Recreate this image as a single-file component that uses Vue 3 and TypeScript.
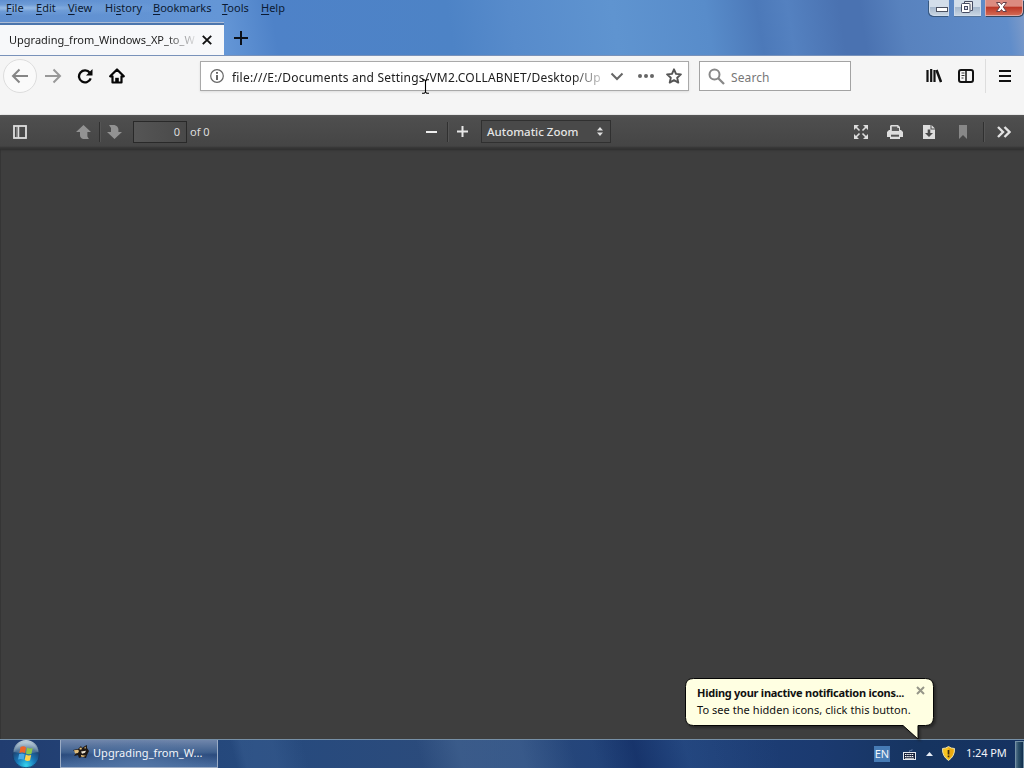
<script setup lang="ts">
interface MenuItem { key: string; rest: string; width: number; pre?: string }
const menus: MenuItem[] = [
  { key: 'F', rest: 'ile', width: 30 },
  { key: 'E', rest: 'dit', width: 32 },
  { key: 'V', rest: 'iew', width: 37 },
  { pre: 'Hi', key: 's', rest: 'tory', width: 48 },
  { key: 'B', rest: 'ookmarks', width: 69 },
  { key: 'T', rest: 'ools', width: 39 },
  { key: 'H', rest: 'elp', width: 40 },
]
</script>

<template>
  <div class="screen">
    <header class="titlebar">
      <div class="top">
        <nav class="menu">
          <span v-for="m in menus" :key="m.key + m.rest" :style="{ width: m.width + 'px' }">{{ m.pre }}<u>{{ m.key }}</u>{{ m.rest }}</span>
        </nav>
        <div class="winbtns">
          <span class="wb min"><svg width="19" height="16"><rect x="7.5" y="7.5" width="11" height="4" fill="#fff" stroke="#4c5262"/></svg></span>
          <span class="wb max"><svg width="26" height="16"><path d="M10.5 3.5V1.500h8v9h-2" fill="#eee" stroke="#454b62"/><rect x="7.500" y="3.500" width="8.500" height="9" rx="1" fill="#fff" stroke="#454b62"/><rect x="10.500" y="6.500" width="3" height="3" fill="#dde" stroke="#454b62"/></svg></span>
          <span class="wb close"><svg width="37" height="16"><path d="M12.500 2.500h3.500l1.500 2 1.500-2h3.500l-3.200 4.500 3.200 4.500h-3.500l-1.500-2-1.500 2h-3.500l3.200-4.500z" fill="#fff" stroke="#664048"/></svg></span>
        </div>
      </div>
      <div class="tabs">
        <div class="tab">
          <span class="tabtitle">Upgrading_from_Windows_XP_to_W</span>
          <svg width="12" height="12"><path d="M1.800 1.800l8.400 8.400M10.200 1.800l-8.400 8.400" stroke="#111" stroke-width="1.900"/></svg>
        </div>
        <svg class="plus" width="14" height="14"><path d="M7 0v14M0 7h14" stroke="#0b1018" stroke-width="2"/></svg>
      </div>
    </header>

    <section class="nav">
      <span class="back"><svg width="18" height="16" fill="none" stroke="#858585" stroke-width="2"><path d="M17 8H2M8.500 1.500L2 8l6.500 6.500"/></svg></span>
      <svg class="fwd" width="18" height="16" fill="none" stroke="#989898" stroke-width="2"><path d="M1 8h15M9.500 1.500L16 8l-6.500 6.500"/></svg>
      <svg class="reload" width="16" height="16" fill="none" stroke="#080808" stroke-width="2.300"><path d="M12.800 4.800A6 6 0 1 0 13.700 10.300"/><path d="M15.500 1v6.500H9z" fill="#080808" stroke="none"/></svg>
      <svg class="home" width="16" height="16"><path d="M8 1.500L1.200 8.300H3.500V14.500H12.500V8.300H14.800Z" fill="none" stroke="#050505" stroke-width="2.200" stroke-linejoin="round"/><path d="M6.200 14V9.800h3.600V14z" fill="#050505"/></svg>
      <div class="url">
        <svg width="14" height="14"><circle cx="7" cy="7" r="6.300" fill="none" stroke="#666" stroke-width="1.200"/><path d="M7 6v5M7 3v1.800" stroke="#555" stroke-width="1.800"/></svg>
        <span class="address">file:///E:/Documents and Settings/VM2.COLLABNET/Desktop/Up</span>
        <svg class="chev" width="14" height="9"><path d="M1.500 1.500L7 7l5.500-5.500" fill="none" stroke="#666" stroke-width="2"/></svg>
        <svg class="dots" width="16" height="4" fill="#666"><circle cx="2" cy="2" r="2"/><circle cx="8" cy="2" r="2"/><circle cx="14" cy="2" r="2"/></svg>
        <svg class="star" width="16" height="16"><path d="M8 1.300l2 4.600 4.900.5-3.700 3.300 1.100 4.900L8 12.100l-4.300 2.500 1.100-4.900L1.100 6.400 6 5.900z" fill="none" stroke="#555" stroke-width="1.900" stroke-linejoin="round"/></svg>
      </div>
      <div class="search">
        <svg width="17" height="17" fill="none" stroke="#888"><circle cx="6.500" cy="6.500" r="5" stroke-width="2"/><path d="M10 10l6 6" stroke-width="2.300"/></svg>
        <span>Search</span>
      </div>
      <svg class="library" width="16" height="14" stroke="#111"><path d="M1.500 1v12M5.200 0v13M8.500 1v12" stroke-width="2.200"/><path d="M10.500 1l4.500 12" stroke-width="2.500"/></svg>
      <svg class="sidebar" width="16" height="14"><rect x="1" y="1" width="14" height="12" rx="2" fill="none" stroke="#111" stroke-width="2"/><path d="M8 1v12" stroke="#111" stroke-width="1.500"/><path d="M3.500 4h3M3.500 6.500h3M3.500 9h2" stroke="#333"/></svg>
      <i class="navsep"></i>
      <svg class="burger" width="12" height="12"><path d="M0 1h12M0 6h12M0 11h12" stroke="#111" stroke-width="2"/></svg>
    </section>

    <section class="pdfbar">
      <svg class="p-side" width="14" height="14"><rect x="1" y="1" width="12" height="12" fill="none" stroke="#dedede" stroke-width="1.800"/><path d="M3 2h2v10H3z" fill="#777"/><path d="M5.500 1v12" stroke="#dedede" stroke-width="1.500"/></svg>
      <svg class="p-up" width="16" height="14" fill="#929292"><path d="M7.500 0L15 7h-3.600v4.500l1.500 2.500H7.200Q4 13 4 10V7H0z"/></svg>
      <i class="psep a"></i>
      <svg class="p-down" width="16" height="14" fill="#929292"><path d="M7.500 14L15 7h-3.600V4Q11 1 7.500 0H2l2 3v4H0z"/></svg>
      <span class="page">0</span><span class="of">of 0</span>
      <svg class="p-minus" width="11" height="10"><path d="M0 5h11" stroke="#eee" stroke-width="2"/></svg>
      <i class="psep b"></i>
      <svg class="p-plus" width="11" height="11"><path d="M0 5.500h11M5.500 0v11" stroke="#e8e8e8" stroke-width="2"/></svg>
      <div class="zoom"><span>Automatic Zoom</span><svg width="6" height="9" fill="#e0e0e0"><path d="M0 3.500L3 0l3 3.500zM0 5.500h6L3 9z"/></svg></div>
      <svg class="p-full" width="14" height="14" fill="#ddd" stroke="#ddd"><path d="M0 0h5L3.500 1.500 1.500 3.500 0 5zM14 0v5l-1.500-1.500-2-2L9 0zM0 14V9l1.500 1.500 2 2L5 14zM14 14H9l1.500-1.500 2-2L14 9z" stroke="none"/><path d="M2 2l3.500 3.500M12 2L8.500 5.500M2 12l3.500-3.500M12 12L8.500 8.500" stroke-width="1.600"/></svg>
      <svg class="p-print" width="16" height="14"><path d="M4 0h7l2 2v3h1l2 2v5h-3v2H3v-2H0V7l2-2h1V1z" fill="#ddd"/><path d="M4.800 1.500h5.500V3H12v3H4.800z" fill="#5c5c5c"/><path d="M4 9.700h8v2H4z" fill="#555"/></svg>
      <svg class="p-save" width="12" height="14"><path d="M0 0h7.500v4.500H12V14H0zM8.500 0L12 3.500H8.500z" fill="#ddd"/><path d="M4.700 4.500h2.600V8H10l-4 4-4-4h2.700z" fill="#4b4b4b"/></svg>
      <svg class="p-mark" width="8" height="14"><path d="M0 0h8v14l-4-4-4 4z" fill="#888"/></svg>
      <i class="psep c"></i>
      <svg class="p-more" width="14" height="12"><path d="M1 1l5 5-5 5M7.500 1l5 5-5 5" fill="none" stroke="#e2e2e2" stroke-width="2.400"/></svg>
    </section>
    <main class="viewer"></main>

    <footer class="taskbar">
      <svg class="orb" viewBox="0 0 28 28" width="28" height="28">
        <defs>
          <radialGradient id="orb" cx=".5" cy=".9" r=".85"><stop offset="0" stop-color="#35d5ee"/><stop offset=".4" stop-color="#1978b8"/><stop offset=".75" stop-color="#1d4777"/><stop offset="1" stop-color="#8aa6bd"/></radialGradient>
          <linearGradient id="shine" x2="0" y2="1"><stop offset="0" stop-color="#c5d4de"/><stop offset="1" stop-color="#8fa9bd" stop-opacity=".3"/></linearGradient>
        </defs>
        <circle cx="14" cy="14.500" r="13.300" fill="url(#orb)" stroke="#173762" stroke-width=".7"/><path d="M1.500 12A12.500 12 0 0 1 26.500 12Q14 14.500 1.500 12z" fill="url(#shine)"/>
        <path d="M8.500 7q3-1.500 5.500.2l-1 6q-2.600-1.600-5.600-.3z" fill="#ee6427"/><path d="M15 7.500q2.600 1.600 5.700.4l-1.300 6q-3 1-5.400-.5z" fill="#8ec847"/><path d="M7.100 14q3-1.200 5.600.3l-1.100 5.500q-2.500-1.500-5.500-.3z" fill="#4baae5"/><path d="M13.800 14.600q2.500 1.500 5.400.5L18 20.600q-3 1-5.300-.5z" fill="#ffd34a"/>
      </svg>
      <div class="task">
        <svg width="16" height="14"><path d="M0 5l5-1 3-3 1 2 3-2 2-1v3l2 3-2 4-1 3-4-1-3 1-1-3-4 1 2-3z" fill="#1e1713"/><path d="M1 5.300l4-.5 1 1.200-1 2-3 .5zM6 4l2-1.700 1 1.500-1 1zM11 3l2-1.500-.5 2.200zM8 10l5 .8-3 1.200-2-.5z" fill="#e0bd7c"/><path d="M8 6.500l5-.8-1 2-3 1z" fill="#ede5d3"/></svg>
        <span>Upgrading_from_W...</span>
      </div>
      <div class="tray">
        <span class="lang">EN</span>
        <svg class="kbd" width="13" height="11"><path d="M6.500 3V1.500H9V0" fill="none" stroke="#536b96"/><rect x=".5" y="3.500" width="12" height="7" fill="#17213a" stroke="#e5e9ef"/><path d="M2 5.500h9M2 7.500h9" stroke="#fff" stroke-dasharray="1.500 .7"/><path d="M2 9.300h9" stroke="#ddd"/></svg>
        <svg class="tri" width="7" height="4"><path d="M0 4l3.500-4L7 4z" fill="#e8eef7"/></svg>
        <svg class="shield" width="13" height="15"><path d="M6.500.5Q9 2.500 12.500 2.500 13 10 6.500 14.500 0 10 .5 2.500 4 2.500 6.500.5z" fill="#f8c420" stroke="#e6dcae"/><path d="M6.500 1.500Q9 3 11.500 3.300 12 9.500 6.500 13z" fill="#e9a910"/><path d="M6.500 4v4.500M6.500 9.500v1.800" stroke="#3b2b10" stroke-width="1.700"/></svg>
        <span class="clock">1:24 PM</span>
        <i class="desktop"></i>
      </div>
    </footer>

    <svg class="cursor" width="9" height="15"><path d="M1 .7h2.300L4.500 2 5.700.7H8M4.500 2v11M1 14.300h2.300L4.500 13l1.200 1.300H8" fill="none" stroke="#000" stroke-width="1.100"/></svg>
    <aside class="balloon">
      <svg class="bubble" width="256" height="70"><path d="M9.500 1.500H241.500Q249.500 1.500 249.500 9.500V40.500Q249.500 48.500 241.500 48.500H234V62L219 48.500H9.500Q1.500 48.500 1.500 40.500V9.500Q1.500 1.500 9.500 1.500z" fill="#ffffe2" stroke="#050505"/></svg>
      <div class="btext">
        <div class="brow"><strong>Hiding your inactive notification icons...</strong><svg width="9" height="9"><path d="M1 1l7 7M8 1L1 8" stroke="#969689" stroke-width="2"/></svg></div>
        <p>To see the hidden icons, click this button.</p>
      </div>
    </aside>
  </div>
</template>

<style>
html, body { margin: 0; overflow: hidden; background: #3e3e3e; }
</style>
<style scoped>
* { box-sizing: border-box; }
svg { display: block; flex: none; }
.screen { width: 1024px; height: 768px; display: flex; flex-direction: column; position: relative; font-family: "Noto Sans", "Open Sans", sans-serif; font-size: 11px; overflow: hidden; white-space: nowrap; }
.titlebar { height: 56px; background: radial-gradient(ellipse at 15px 8px, #9cbfe9 0, #82addf66 70px, transparent 170px), linear-gradient(81deg, #608fcf 0, #6496d6 22%, #4e82c8 27%, #4d83c6 44%, #578bcb 50%, #5f94d0 60%, #588cca 69%, #4c79b9 74%, #5481c0 77%, #4a72b1 82%, #4a72b1 84%, #5882be 88%, #608dca 98%, #809cc9); border-bottom: 1px solid #7992ba; display: flex; flex-direction: column; flex: none; }
.top { height: 24px; display: flex; justify-content: space-between; }
.menu { display: flex; padding-left: 6px; color: #0b1a32; line-height: 16px; }
.menu u { text-underline-offset: 2px; }
.winbtns { display: flex; height: 16px; padding-right: 1px; }
.wb { height: 16px; border: 1px solid #d0dceb; border-top: 0; background: linear-gradient(#d3deea 0 45%, #a7b9ce 50%, #c7d4e1); overflow: hidden; display: flex; }
.min { width: 20px; border-radius: 0 0 0 5px; margin-right: 5px; box-shadow: -1px 1px #37587f; }
.max { width: 27px; margin-right: 4px; box-shadow: 0 1px #54749b; }
.close { width: 38px; border-radius: 0 0 5px 0; border-color: #e1a9a5; background: linear-gradient(#dc8b80 0 40%, #bd3828 50%, #d26852); box-shadow: 1px 1px #35465d; }
.wb svg { margin-left: -1px; }
.close svg { margin-left: -2px; }
.tabs { display: flex; height: 32px; }
.tab { width: 224px; height: 32px; background: #f7f8fa; border-top: 2px solid #4b75ad; display: flex; align-items: center; padding-left: 9px; flex: none; box-shadow: 0 -1px #adbcd4; }
.tabtitle { width: 187px; margin-right: 5px; padding-bottom: 2px; color: #1c1c1c; mask-image: linear-gradient(90deg, #000 155px, transparent 190px); }
.plus { margin: 8px 0 0 10px; }
.nav { height: 59px; flex: none; background: #f5f5f5; display: flex; align-items: center; padding: 0 13px 19px 3px; }
.back { width: 34px; height: 34px; border: 1px solid #ddd; border-radius: 50%; background: #fafafa; display: flex; align-items: center; justify-content: center; }
.fwd { margin-left: 7px; }
.reload { margin-left: 15px; }
.home { margin-left: 16px; }
.url { width: 489px; height: 30px; margin-left: 75px; background: #fff; border: 1px solid #a9a9a9; display: flex; align-items: center; padding-left: 9px; flex: none; box-shadow: 0 1px 2px #ddd; }
.address { width: 369px; margin-left: 8px; padding-top: 2px; font-size: 12px; letter-spacing: .2px; color: #202020; mask-image: linear-gradient(90deg, #000 340px, transparent 378px); }
.chev { margin-left: 9px; }
.dots { margin-left: 14px; }
.star { margin-left: 12px; }
.search { width: 152px; height: 30px; margin-left: 10px; background: #fff; border: 1px solid #a3a3a3; display: flex; align-items: center; padding-left: 8px; color: #777; font-size: 12px; gap: 6px; flex: none; letter-spacing: .1px; }
.search span { padding-top: 2px; }
.library { margin-left: 75px; }
.sidebar { margin-left: 16px; }
.navsep { width: 1px; height: 34px; background: #ddd; margin: 0 13px 0 11px; }
.pdfbar { height: 34px; flex: none; background: linear-gradient(#555 0, #4e4e4e 3px, #454545 31px, #343434 33px); box-shadow: 0 1px 2px #2c2c2c; display: flex; align-items: center; padding: 0 13px 1px; position: relative; color: #ddd; }
.p-up { margin-left: 49px; }
.psep { width: 1px; height: 20px; background: #303030; box-shadow: 1px 0 #555; }
.a { margin: 0 7px; }
.page { width: 54px; height: 22px; border: 1px solid #292929; background: linear-gradient(90deg, #555, #494949); margin-left: 10px; line-height: 20px; text-align: right; padding-right: 6px; }
.of { width: 20px; margin-left: 3px; }
.p-minus { margin-left: 216px; }
.b { margin: 0 9px 0 10px; }
.zoom { width: 130px; height: 23px; margin-left: 13px; border: 1px solid #303030; background: #494949; display: flex; align-items: center; justify-content: space-between; padding: 0 7px 0 5px; font-size: 11.5px; font-weight: 500; color: #e4e4e4; }
.p-full { margin-left: auto; }
.p-print { margin-left: 19px; }
.p-save { margin-left: 20px; }
.p-mark { margin-left: 24px; }
.c { margin: 0 13px 0 16px; }
.viewer { flex: 1; background: #3e3e3e; border-left: 1px solid #353535; }
.taskbar { height: 29px; flex: none; border-top: 1px solid #7690a7; background: linear-gradient(75deg, transparent 23%, #41669955 24% 27%, transparent 30% 41%, #5073a066 45% 51%, transparent 56% 58%, #061a5059 62%, #39619a33 67%, transparent 76%), linear-gradient(90deg, #213d70, #264a7e 25%, #2c4b7b 45%, #1f417a 65%, #1b3a70 80%, #163460 90%, #153261); display: flex; align-items: center; color: #f2f5fa; overflow: hidden; }
.orb { margin-left: 12px; }
.task { width: 158px; height: 28px; margin: 0 0 1px 20px; border: 1px solid #9aabc4; border-top: 0; background: radial-gradient(ellipse at 50% 100%, #5275a5 0, transparent 75%), linear-gradient(#7086ab, #40618f 45%, #2b4b7d 55%, #496c9e); display: flex; align-items: center; padding: 0 0 2px 12px; gap: 4px; letter-spacing: .05px; }
.tray { display: flex; align-items: center; height: 29px; margin-left: auto; }
.lang { width: 16px; height: 16px; margin-bottom: 1px; background: #467bb5; line-height: 16px; text-align: center; }
.kbd { margin: 1px 0 0 13px; }
.tri { margin: 0 0 1px 10px; }
.shield { margin: 0 0 1px 9px; }
.clock { margin: 0 0 3px 11px; width: 49px; letter-spacing: -.1px; }
.desktop { width: 9px; height: 28px; background: linear-gradient(90deg, #54728b, #2c5069 35%, #102d4c); border: 1px solid #7390a4; margin-top: 1px; }
.cursor { position: absolute; left: 421px; top: 79px; }
.balloon { position: absolute; left: 684px; top: 677px; width: 256px; height: 70px; color: #111; }
.bubble { position: absolute; filter: drop-shadow(2px 2px 1px #1b1b1b99); }
.btext { position: relative; padding: 8px 15px 0 13px; }
.brow { display: flex; justify-content: space-between; line-height: 16px; }
.brow strong { letter-spacing: -.26px; }
.brow svg { margin: 1px 0 0; }
.btext p { margin: 1px 0 0; line-height: 16px; letter-spacing: .05px; }
</style>
